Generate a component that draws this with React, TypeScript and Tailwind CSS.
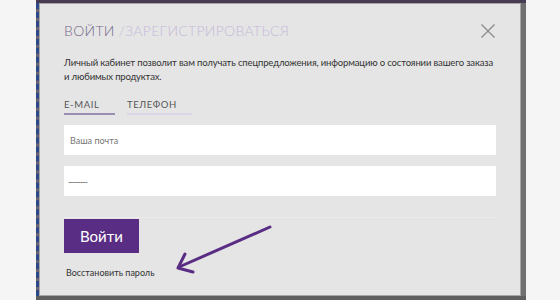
export default function App() {
  return (
    <div className="w-[560px] h-[300px] bg-[#f5f5f5] flex overflow-hidden" style={{ fontFamily: "Lato, 'Noto Sans', sans-serif" }}>
      <div className="ml-[36px] w-[490px] h-[300px] bg-[#6a6470] flex flex-col">
        <div className="h-[3px] bg-[#463b52]" />
        <div className="flex flex-1 border-b-[4px] border-b-[#5e5e5e]">
          <div className="w-[3px] border-l-[3px] border-dashed border-l-[#2c4a8a] bg-[#6a6470]" />
          <div className="w-[482px] h-[293px] bg-[#e5e5e5] border border-[#a6a6a6] pl-[24px] pr-[24px] pt-[18px] flex flex-col">
            <div className="flex items-start justify-between">
              <h1 className="text-[14px] font-light tracking-[0.3px] leading-[18px]">
                <span className="text-[#74688a]">ВОЙТИ </span>
                <span className="text-[#c6b9da]">/ЗАРЕГИСТРИРОВАТЬСЯ</span>
              </h1>
              <svg width="16" height="16" viewBox="0 0 16 16" className="mt-[1px]">
                <path d="M1.5 1.5 L14.5 14.5 M14.5 1.5 L1.5 14.5" stroke="#8a8a8a" strokeWidth="1.3" fill="none" />
              </svg>
            </div>
            <p className="mt-[16px] text-[9.5px] tracking-[-0.15px] leading-[14px] text-[#333] w-[440px] whitespace-nowrap">
              Личный кабинет позволит вам получать спецпредложения, информацию о состоянии вашего заказа
              <br />и любимых продуктах.
            </p>
            <div className="flex gap-[12px] mt-[14px] text-[9.5px] tracking-[0.6px] text-[#555]">
              <div className="w-[51px] border-b-[2px] border-[#9d8fb3] pb-[1px]">E-MAIL</div>
              <div className="w-[65px] border-b-[2px] border-[#dcd5e8] pb-[1px]">ТЕЛЕФОН</div>
            </div>
            <div className="mt-[10px] w-[432px] h-[30px] bg-white flex items-center pl-[6px] text-[9px] text-[#777]">
              Ваша почта
            </div>
            <div className="mt-[11px] w-[432px] h-[30px] bg-white flex items-center pl-[4px] text-[9px] text-[#666] tracking-[-1px]">
              --------
            </div>
            <div className="mt-[21px] border-t border-[#ececec] w-[432px]" />
            <div className="relative">
              <button className="mt-[1px] w-[75px] h-[34px] bg-[#5a2d84] text-white text-[15px] font-normal">
                Войти
              </button>
              <svg width="110" height="60" viewBox="0 0 110 60" className="absolute left-[105px] top-[0px]">
                <path d="M101 9 L10 49" stroke="#5a2d84" strokeWidth="3" strokeLinecap="round" fill="none" />
                <path d="M16 36 L9 50 L24 54" stroke="#5a2d84" strokeWidth="3" strokeLinecap="round" strokeLinejoin="round" fill="none" />
              </svg>
            </div>
            <div className="mt-[13px] ml-[2px] text-[9px] text-[#333]">Восстановить пароль</div>
          </div>
          <div className="flex-1 bg-[#707070]" />
        </div>
      </div>
    </div>
  );
}
